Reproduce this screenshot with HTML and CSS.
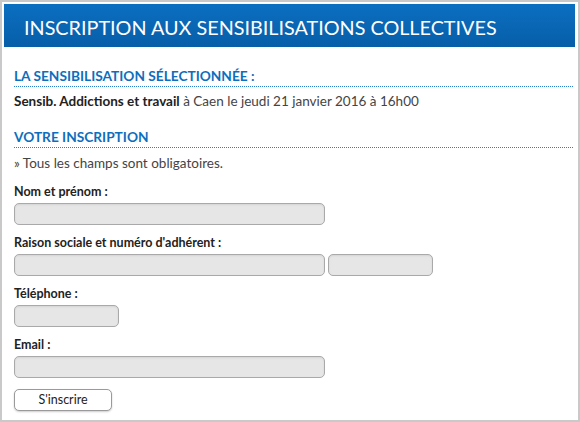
FILE: index.html
```html
<!DOCTYPE html>
<html lang="fr">
<head>
  <meta charset="UTF-8">
  <title>Inscription aux sensibilisations collectives</title>
  <link rel="stylesheet" href="styles.css">
</head>
<body>
  <div class="page">
    <h1 class="banner">INSCRIPTION AUX SENSIBILISATIONS COLLECTIVES</h1>

    <div class="content">
      <h2 class="section">LA SENSIBILISATION SÉLECTIONNÉE :</h2>
      <p class="choice"><strong>Sensib. Addictions et travail</strong> à Caen le jeudi 21 janvier 2016 à 16h00</p>

      <h2 class="section">VOTRE INSCRIPTION</h2>
      <p class="note">» Tous les champs sont obligatoires.</p>

      <form class="form">
        <div class="field">
          <label>Nom et prénom :</label>
          <div class="row"><input type="text" class="wide"></div>
        </div>
        <div class="field">
          <label>Raison sociale et numéro d'adhérent :</label>
          <div class="row"><input type="text" class="wide"><input type="text" class="mid"></div>
        </div>
        <div class="field">
          <label>Téléphone :</label>
          <div class="row"><input type="text" class="short"></div>
        </div>
        <div class="field">
          <label>Email :</label>
          <div class="row"><input type="text" class="wide"></div>
        </div>
        <button type="button" class="btn">S'inscrire</button>
      </form>
    </div>
  </div>
</body>
</html>
```

FILE: styles.css
```css
html,body{margin:0;padding:0}
body{font-family:Lato,"Open Sans",sans-serif;color:#333;background:#fff}
.page{
  box-sizing:border-box;width:580px;height:422px;
  border:2px solid #c9c9c9;padding:2px 3px 0 2px;
}
.banner{
  margin:0;height:43px;line-height:47px;padding-left:20px;
  background:linear-gradient(#0b6fc1,#075ea8);
  color:#fff;font-size:19.8px;font-weight:normal;
}
.content{padding:20px 2px 0 10px}
.section{
  margin:0;font-size:13.7px;font-weight:bold;color:#0d6ebd;
  padding-bottom:2px;border-bottom:1px dotted #2a80d0;line-height:17px;
}
.choice{margin:5px 0 18px;font-size:13.5px;line-height:18px;color:#444}
.choice strong{color:#222}
.note{margin:6px 0 12px;font-size:13.5px;line-height:18px;color:#444}
.field{margin-bottom:10px}
.field label{display:block;font-size:12.5px;font-weight:bold;color:#222;line-height:16px;margin-bottom:3px}
.row{display:flex;gap:3px}
.row input{
  box-sizing:border-box;height:22px;margin:0;
  background:#e6e6e6;border:1px solid #a9a9a9;border-radius:5px;
  box-shadow:inset 0 1px 2px rgba(0,0,0,.08);
}
.wide{width:311px}
.mid{width:105px}
.short{width:105px}
.btn{
  box-sizing:border-box;width:98px;height:22px;
  background:#fff;border:1px solid #9a9a9a;border-radius:5px;
  box-shadow:0 1px 2px rgba(0,0,0,.2);
  font-family:Lato,sans-serif;font-size:12.5px;color:#222;cursor:pointer;
}
```
